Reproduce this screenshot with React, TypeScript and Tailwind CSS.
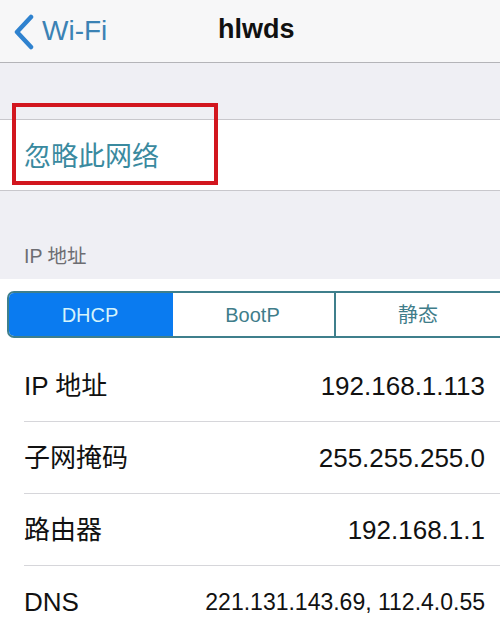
const font = { fontFamily: '"Liberation Sans", "Noto Sans CJK SC", sans-serif' };

const rows = [
  { label: "IP 地址", value: "192.168.1.113" },
  { label: "子网掩码", value: "255.255.255.0" },
  { label: "路由器", value: "192.168.1.1" },
  { label: "DNS", value: "221.131.143.69, 112.4.0.55", small: true },
];

export default function App() {
  return (
    <div className="relative w-[500px] h-[636px] overflow-hidden bg-[#efeff4]" style={font}>
      {/* nav bar */}
      <header className="relative flex h-[63px] items-center border-b border-[#b4b4b8] bg-[#f7f7f8]">
        <div className="flex items-center pl-[12px]">
          <svg width="24" height="36" viewBox="0 0 24 36" className="mt-[1px]">
            <path d="M19 3 L5 18 L19 33" fill="none" stroke="#2f82cf" strokeWidth="4.5" strokeLinecap="round" strokeLinejoin="round" />
          </svg>
          <span className="ml-[6px] text-[28px] leading-none text-[#3b82b4]">Wi-Fi</span>
        </div>
        <h1 className="absolute left-[218px] top-[14px] text-[27px] font-bold leading-none text-[#111] pt-[2px]">hlwds</h1>
      </header>

      <div className="h-[56px]" />

      {/* forget network */}
      <div className="flex h-[72px] items-center border-y border-[#c8c7cc] bg-white pl-[24px]">
        <span className="text-[27px] leading-none text-[#3a8a9f] mt-[4px]">忽略此网络</span>
      </div>

      <div className="flex h-[88px] items-end pb-[13px] pl-[24px]">
        <span className="text-[19.5px] leading-none text-[#6d6d72]">IP 地址</span>
      </div>

      {/* details */}
      <section className="bg-white pt-[12px]">
        <div className="ml-[7px] mr-[-8px] flex h-[47px] overflow-hidden rounded-[7px] border-2 border-[#3f7f8c] text-[20px]">
          <div className="-m-[2px] flex w-[166px] items-center justify-center rounded-l-[7px] bg-[#0a7bf0] text-[#d4f3fb]">DHCP</div>
          <div className="flex w-[165px] items-center justify-center border-r-2 border-[#3f7f8c] text-[#3f7d8a]">BootP</div>
          <div className="flex flex-1 items-center justify-center text-[#3f7d8a] pr-[6px]">静态</div>
        </div>

        <div className="mt-[12px]">
          {rows.map((r, i) => (
            <div key={r.label} className="pl-[24px]">
              <div className={`flex h-[72px] items-center justify-between pr-[15px] ${i < rows.length - 1 ? "border-b border-[#d6d6da]" : ""}`}>
                <span className="text-[26px] leading-none text-[#111]">{r.label}</span>
                <span className={`${r.small ? "text-[23px]" : "text-[26px]"} leading-none text-[#111]`}>{r.value}</span>
              </div>
            </div>
          ))}
        </div>
      </section>

      {/* red highlight box */}
      <div className="absolute left-[12px] top-[103px] h-[82px] w-[206px] border-4 border-[#d2161e]" />
    </div>
  );
}
